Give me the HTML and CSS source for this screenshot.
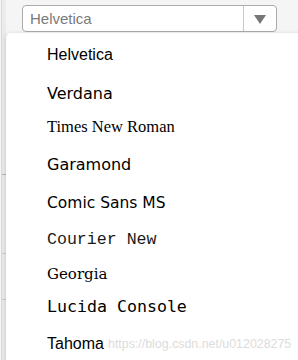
FILE: index.html
```html
<!DOCTYPE html>
<html lang="en">
<head>
<meta charset="utf-8">
<title>Font select</title>
<link rel="stylesheet" href="styles.css">
</head>
<body>
<div class="page">
  <div class="rail">
    <div class="rail-row rail-row-a"></div>
    <div class="rail-row rail-row-b"></div>
    <div class="rail-row rail-row-c"></div>
  </div>
  <div class="main">
    <div class="select">
      <span class="select-value">Helvetica</span>
      <span class="select-arrow">
        <svg width="12" height="9" viewBox="0 0 12 9"><path d="M0 0H12L6 9Z" fill="#777"/></svg>
      </span>
    </div>
  </div>
  <ul class="menu">
    <li class="option f-helvetica">Helvetica</li>
    <li class="option f-verdana">Verdana</li>
    <li class="option f-times">Times New Roman</li>
    <li class="option f-garamond">Garamond</li>
    <li class="option f-comic">Comic Sans MS</li>
    <li class="option f-courier">Courier New</li>
    <li class="option f-georgia">Georgia</li>
    <li class="option f-lucida">Lucida Console</li>
    <li class="option f-tahoma">Tahoma</li>
  </ul>
  <span class="watermark">https://blog.csdn.net/u012028275</span>
</div>
</body>
</html>
```

FILE: styles.css
```css
html, body {
  margin: 0;
  padding: 0;
}

body {
  background: #f5f5f5;
  font-family: "Liberation Sans", Arial, sans-serif;
}

.page {
  position: relative;
  display: flex;
  width: 298px;
  height: 360px;
  overflow: hidden;
  background: #f5f5f5;
}

.rail {
  width: 4px;
  margin-left: 1px;
  border-left: 1px solid #d9d9d9;
  background: #ebebeb;
  display: flex;
  flex-direction: column;
}

.rail-row {
  flex: none;
  border-bottom: 1px solid #cfcfcf;
}

.rail-row-a {
  height: 174px;
  border-bottom-color: #b4b4b4;
}

.rail-row-b {
  height: 78px;
}

.rail-row-c {
  height: 45px;
}

.main {
  flex: 1;
  padding: 5px 21px 0 16px;
}

.select {
  display: flex;
  align-items: stretch;
  height: 25px;
  border: 1px solid #ababab;
  border-radius: 4px;
  background: #fff;
}

.select-value {
  flex: 1;
  padding-left: 7px;
  font-size: 15px;
  line-height: 25px;
  color: #7a7a7a;
}

.select-arrow {
  width: 32px;
  border-left: 1px solid #c8c8c8;
  display: flex;
  align-items: center;
  justify-content: center;
  padding-top: 1px;
}

.menu {
  position: absolute;
  top: 33px;
  left: 6px;
  right: -20px;
  bottom: -20px;
  margin: 0;
  padding: 0;
  list-style: none;
  background: #fff;
  border-radius: 5px 0 0 0;
  box-shadow: 0 1px 5px rgba(0, 0, 0, 0.18);
}

.option {
  padding: 8px 0 8px 41px;
  line-height: 20px;
  font-size: 16px;
  color: #000;
  white-space: nowrap;
}

.f-helvetica {
  font-family: "Liberation Sans", Arial, sans-serif;
  padding-top: 11.5px;
}

.f-verdana {
  font-family: "DejaVu Sans", Verdana, sans-serif;
  padding-top: 11px;
}

.f-times {
  font-family: "Liberation Serif", "Times New Roman", serif;
  font-size: 16.5px;
  padding-top: 5px;
}

.f-garamond {
  font-family: "DejaVu Sans", sans-serif;
  padding-top: 10px;
}

.f-comic {
  font-family: "DejaVu Sans", sans-serif;
  font-size: 15.5px;
  padding-top: 10.5px;
}

.f-courier {
  font-family: "Liberation Mono", "Courier New", monospace;
  font-size: 16.6px;
  color: #1a1a1a;
  padding-top: 8.5px;
}

.f-georgia {
  font-family: "DejaVu Serif", Georgia, serif;
  font-size: 15px;
  padding-top: 6.5px;
}

.f-lucida {
  font-family: "DejaVu Sans Mono", monospace;
  font-size: 16.6px;
  padding-top: 5px;
}

.f-tahoma {
  font-family: "Liberation Sans", Tahoma, sans-serif;
  padding-top: 9px;
}

.watermark {
  position: absolute;
  left: 108px;
  top: 336px;
  font-family: "Liberation Sans", Arial, sans-serif;
  font-size: 12.4px;
  line-height: 16px;
  color: #dcdcdc;
  white-space: nowrap;
}
```
